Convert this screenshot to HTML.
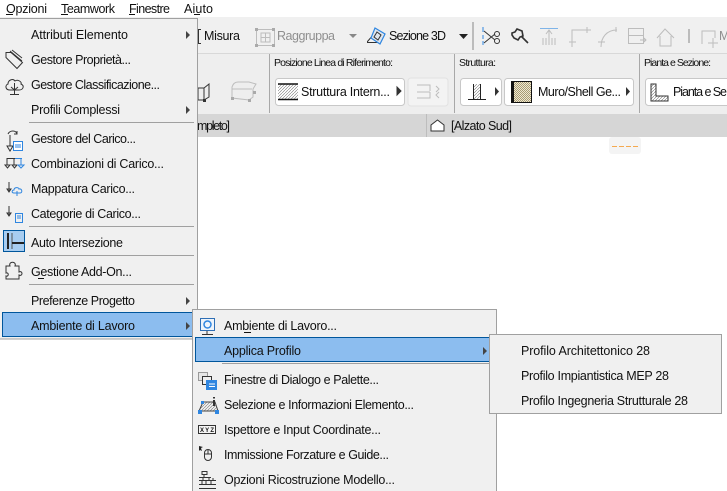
<!DOCTYPE html>
<html><head><meta charset="utf-8"><title>Opzioni</title>
<style>
html,body{margin:0;padding:0;background:#fff;width:727px;height:491px;overflow:hidden}
svg{display:block}
text{font-family:"Liberation Sans",sans-serif;font-size:12.5px;fill:#111}
.s{font-size:10.5px}
.g{fill:#8f8f8f}
.i{fill:none;stroke:#333;stroke-width:1}
.l{fill:none;stroke:#bdbdbd;stroke-width:1}
.b{fill:none;stroke:#2f86e0;stroke-width:1}
</style></head><body>
<svg width="727" height="491" viewBox="0 0 727 491" xmlns="http://www.w3.org/2000/svg">
<defs><pattern id="h" width="3" height="3" patternUnits="userSpaceOnUse"><path d="M0 3L3 0" stroke="#777" stroke-width=".6"/></pattern>
<pattern id="d" width="2" height="2" patternUnits="userSpaceOnUse"><rect width="2" height="2" fill="#efe8d2"/><rect width="1" height="1" fill="#a89c74"/><rect x="1" y="1" width="1" height="1" fill="#a89c74"/></pattern></defs>
<rect width="727" height="491" fill="#fff"/>
<!-- menu bar -->
<text x="6" y="13" textLength="41">Opzioni</text><rect x="6" y="14" width="7" height="1" fill="#111"/>
<text x="61" y="13" textLength="54">Teamwork</text><rect x="61" y="14" width="7" height="1" fill="#111"/>
<text x="129" y="13" textLength="41">Finestre</text><rect x="129" y="14" width="6" height="1" fill="#111"/>
<text x="184" y="13" textLength="29">Aiuto</text><rect x="194" y="14" width="6" height="1" fill="#111"/>
<!-- toolbars -->
<rect y="17" width="727" height="37" fill="#f0f0f0"/>
<rect y="53" width="727" height="1" fill="#d8d8d8"/>
<rect y="54" width="727" height="60" fill="#eeeeee"/>
<rect y="114" width="727" height="23" fill="#d6d6d6"/>
<rect x="426" y="114" width="1" height="23" fill="#bdbdbd"/>
<rect x="269" y="54" width="1" height="59" fill="#a8a8a8"/>
<rect x="454" y="54" width="1" height="59" fill="#a8a8a8"/>
<rect x="639" y="54" width="1" height="59" fill="#a8a8a8"/>
<text x="204" y="40" textLength="36">Misura</text>
<path d="M198 29h3v1h-2v13h2v1h-3z" fill="#333"/>
<path class="l" d="M256.500 29.500h18v16h-18zM261 33h9v9h-9zM265.500 33v9M261 37.500h9"/>
<rect x="255" y="28" width="3" height="3" fill="#aaa"/><rect x="272" y="28" width="3" height="3" fill="#aaa"/><rect x="255" y="44" width="3" height="3" fill="#aaa"/><rect x="272" y="44" width="3" height="3" fill="#aaa"/>
<text x="277" y="40" textLength="58" class="g">Raggruppa</text>
<path d="M349 34h8l-4 4z" fill="#888"/>
<path d="M367.500 41.500l6-7h6v8h-12z" fill="#f2f2f2" stroke="#333"/><path d="M375 28l10 6-5 10-9-6z" fill="#dfe6ee" stroke="#2f86e0" stroke-width="1.200"/><path d="M377 32l4 3-3 5-4-3z" fill="none" stroke="#333"/>
<text x="389" y="40" textLength="57">Sezione 3D</text>
<path d="M459 34h9l-4.500 5z" fill="#222"/>
<path d="M473 22v28" stroke="#888"/>
<!-- scissors -->
<path d="M483 27v5M483 35v4M483 41v4" stroke="#2f86e0"/>
<path d="M484 31l11 9M484 43l11-9" stroke="#333" fill="none"/><circle cx="497" cy="34" r="2.500" class="i"/><circle cx="497" cy="41" r="2.500" class="i"/>
<!-- hammer -->
<path d="M512 33l3-1 2-3 5 2 1 5-3 1-2 3-4-2-2-3zM521 36l7 7" fill="none" stroke="#333" stroke-width="1.600"/>
<path d="M540 28.500h18" stroke="#7fb4e8"/><path d="M549 45v-15M546 34l3-4 3 4M543 38v7M555 38v7M546 38v7M552 38v7" class="l"/>
<path class="l" d="M572 47v-17h15M569 42h7M587 27v6M583 30h8"/>
<path class="l" d="M601 47c0-10 6-17 16-17M598 42h7M616 27v5"/>
<path class="l" d="M628.500 28.500h15v15h-15zM628.500 35.500h15M640 40h6M644 38l2 2-2 2"/>
<path class="l" stroke-width="1.500" d="M657 38l8-9 9 9M660 36v10h11v-10"/>
<path d="M689 29v14" stroke="#888"/>
<path class="l" d="M702 44v-13h13v7M713 38v10M708 43h10"/>
<text x="719" y="40" class="g">M</text>
<!-- row 2 labels -->
<text class="s" x="274" y="66" textLength="119">Posizione Linea di Riferimento:</text>
<text class="s" x="459" y="66" textLength="37">Struttura:</text>
<text class="s" x="644" y="66" textLength="67">Pianta e Sezione:</text>
<!-- 3d boxes -->
<path class="i" d="M198 88h6l5-4v13l-5 3h-6zM204 88v12"/><rect x="203" y="99" width="3" height="3" fill="#333"/>
<path class="l" d="M232 87c1-3 3-5 6-5h11l7 2-3 5v8l-4 3-17-2zM232 89h20"/><rect x="231" y="97" width="3" height="3" fill="#aaa"/><rect x="248" y="99" width="3" height="3" fill="#aaa"/><rect x="253" y="91" width="3" height="3" fill="#aaa"/>
<!-- buttons -->
<g fill="#fff" stroke="#c8c8c8"><rect x="275.500" y="78.500" width="129" height="27" rx="3"/><rect x="460.500" y="78.500" width="41" height="27" rx="3"/><rect x="504.500" y="78.500" width="129" height="27" rx="3"/><rect x="645.500" y="78.500" width="90" height="27" rx="3"/></g>
<rect x="408" y="78" width="40" height="28" rx="3" fill="#f3f3f3" stroke="#e2e2e2"/>
<rect x="278" y="84" width="20" height="16" fill="url(#h)"/><path d="M278 84h20M278 99.500h20" stroke="#111" stroke-width="1.500"/>
<text x="301" y="96" textLength="89">Struttura Intern...</text>
<path d="M397 87l4 4-4 4z" fill="#333" stroke="#333"/>
<path class="l" d="M417 85h13v6M417 92h13M417 98h13v-6M436 86l3 3-3 3M439 92l-3 3 3 3"/>
<rect x="473" y="84" width="8" height="15" fill="url(#h)"/><path d="M473.500 84v15M480.500 84v15M468 99.500h18" stroke="#222"/>
<path d="M495 87l4 4.500-4 4.500z" fill="#333"/>
<rect x="511.500" y="81.500" width="20" height="21" fill="url(#d)" stroke="#111"/><rect x="512" y="81" width="2" height="21" fill="#111"/>
<text x="538" y="96" textLength="83">Muro/Shell Ge...</text>
<path d="M626 87l4 4.500-4 4.500z" fill="#333"/>
<path d="M651 84v17h17v-5h-12v-12z" fill="url(#h)" stroke="#333"/>
<text x="673" y="96" textLength="54">Pianta e Se</text>
<!-- tab bar -->
<text x="197" y="130" textLength="33">mpleto]</text>
<path d="M431 130v-5l6.500-5 6.500 5v6h-13z" fill="#fff" stroke="#333"/>
<text x="451" y="130" textLength="61">[Alzato Sud]</text>
<rect x="609" y="137" width="32" height="17" rx="3" fill="#f4f4f4"/>
<path d="M612 146.500h26" stroke="#f5a94f" stroke-dasharray="5 2"/>
<!-- main menu -->
<rect x="-1" y="18.500" width="198.500" height="320.500" fill="#f0f0f0" stroke="#a0a0a0"/>
<g fill="#a0a0a0"><rect x="29" y="122" width="165" height="1"/><rect x="29" y="226" width="165" height="1"/><rect x="29" y="255" width="165" height="1"/><rect x="29" y="284" width="165" height="1"/></g>
<rect x="2.500" y="312.500" width="190" height="24" fill="#8cbdef" stroke="#00569c"/>
<text x="31" y="39" textLength="97">Attributi Elemento</text>
<text x="31" y="64" textLength="100">Gestore Proprietà...</text>
<text x="31" y="89" textLength="129">Gestore Classificazione...</text>
<text x="31" y="114" textLength="89">Profili Complessi</text>
<text x="31" y="143" textLength="105">Gestore del Carico...</text>
<text x="31" y="168" textLength="133">Combinazioni di Carico...</text>
<text x="31" y="193" textLength="104">Mappatura Carico...</text>
<text x="31" y="218" textLength="110">Categorie di Carico...</text>
<text x="31" y="247" textLength="92">Auto Intersezione</text>
<text x="31" y="276" textLength="101">Gestione Add-On...</text><rect x="38" y="278" width="6" height="1" fill="#111"/>
<text x="31" y="305" textLength="104">Preferenze Progetto</text>
<text x="31" y="330" textLength="104">Ambiente di Lavoro</text>
<g fill="#444"><path d="M186 31l4 4-4 4z"/><path d="M186 106l4 4-4 4z"/><path d="M186 297l4 4-4 4z"/><path d="M186 322l4 4-4 4z"/></g>
<!-- menu icons -->
<path class="i" stroke-width=".9" d="M6 52.500h5l11.500 10-5.500 6-11-11zM10 51l12 10M12 50l10 8"/>
<path class="i" d="M10 90c-5 0-5-5-2-6 0-4 5-6 7-3 3-2 7 1 6 3 4 2 2 6-2 6zM14.500 83v11M11 87l3.500 3 3.500-3M10 94.500h9"/>
<path class="i" d="M10 135v11M7 146l3 5 3-5zM8 134c2-4 8-4 9 0M17 131v3h-3"/>
<rect x="13.500" y="141.500" width="9" height="9" fill="#fff" stroke="#2f86e0"/><path d="M15 145h6M15 147h6" stroke="#2f86e0"/>
<path class="i" d="M6.500 158.500h9M7 158v7M14 158v7M5 165h5l-2.500 3zM12 165h5l-2.500 3z"/>
<path class="b" d="M21 158.500v6M18 165h6l-3 3zM15 158.500h7"/>
<path class="i" d="M9 182v9M7 189h4l-2 3z"/><path class="b" d="M14 193c-3 0-2-3 0-3 0-3 5-3 5-1 3-1 4 4 1 4zM17 191v5"/>
<path class="i" d="M9 206v10M7 213h4l-2 3z"/><rect x="15.500" y="213.500" width="7" height="9" class="b"/><path class="b" d="M17 216h4M17 218h4"/>
<rect x="3.500" y="230.500" width="21" height="21" fill="#a8cdf0" stroke="#00569c"/>
<path d="M8 233v16" stroke="#222" stroke-width="2"/><path d="M12 233v16" stroke="#555"/><path d="M12 243h12" stroke="#222" stroke-width="2"/>
<path class="i" d="M6 266h4c-2-5 7-5 5 0h4v6c4-2 4 5 0 3v4h-13v-3c3 1 3-4 0-3z"/>
<!-- submenu -->
<rect x="192.500" y="309.500" width="304" height="190" fill="#f0f0f0" stroke="#a0a0a0"/>
<rect x="195.500" y="337.500" width="295" height="24" fill="#8cbdef" stroke="#00569c"/>
<rect x="222" y="363" width="273" height="1" fill="#a0a0a0"/>
<text x="224" y="330" textLength="113">Ambiente di Lavoro...</text><rect x="244" y="332" width="7" height="1" fill="#111"/>
<text x="224" y="355" textLength="77">Applica Profilo</text>
<text x="224" y="384" textLength="155">Finestre di Dialogo e Palette...</text>
<text x="224" y="409" textLength="190">Selezione e Informazioni Elemento...</text>
<text x="224" y="434" textLength="157">Ispettore e Input Coordinate...</text>
<text x="224" y="459" textLength="165">Immissione Forzature e Guide...</text>
<text x="224" y="484" textLength="171">Opzioni Ricostruzione Modello...</text>
<path d="M483 347l4 4-4 4z" fill="#444"/>
<!-- submenu icons -->
<rect x="200.500" y="318.500" width="14" height="12" fill="#eef4fb" stroke="#2f6fb5"/><circle cx="207.500" cy="324.500" r="3.500" fill="none" stroke="#2f86e0" stroke-width="1.500"/><path d="M207 331v3M202 334.500h11" stroke="#333"/>
<rect x="198.500" y="372.500" width="9" height="8" fill="#e6e6e6" stroke="#999"/><rect x="202.500" y="376.500" width="9" height="8" fill="#eee" stroke="#333"/><rect x="206" y="380" width="11" height="10" fill="#2f86e0"/><path d="M209 384h6M209 386.500h6" stroke="#fff"/>
<path d="M199 411l4-9h12l3 9z" fill="url(#h)" stroke="#444"/><g fill="#2f86e0"><rect x="198" y="410" width="4" height="4"/><rect x="215" y="410" width="4" height="4"/><rect x="201" y="401" width="3" height="3"/></g><path d="M214 397v1.500M214 400v6" stroke="#333" stroke-width="2"/>
<rect x="198.500" y="425.500" width="17" height="8" fill="#f5f5f5" stroke="#333"/><text x="200" y="432" style="font-size:6px;font-weight:bold" textLength="14">XYZ</text>
<path d="M199 446v5l1-1 2 1-1-3 2-1z" fill="#222"/><rect x="204.500" y="449.500" width="7" height="11" rx="3.500" class="i"/><path d="M208 450v4M205 454h6" stroke="#333"/>
<path class="i" d="M202 471.500h5v3h-5zM199 477.500h12M199 480.500h17M199 484.500h17M199 488.500h17M204 475v3M203 478v3M209 478v3M213 478v3M206 481v3M211 481v3M202 481v3"/>
<!-- third menu -->
<rect x="489.500" y="334.500" width="232" height="79" fill="#f0f0f0" stroke="#a0a0a0"/>
<text x="521" y="355" textLength="129">Profilo Architettonico 28</text>
<text x="521" y="380" textLength="148">Profilo Impiantistica MEP 28</text>
<text x="521" y="405" textLength="167">Profilo Ingegneria Strutturale 28</text>
</svg>
</body></html>
